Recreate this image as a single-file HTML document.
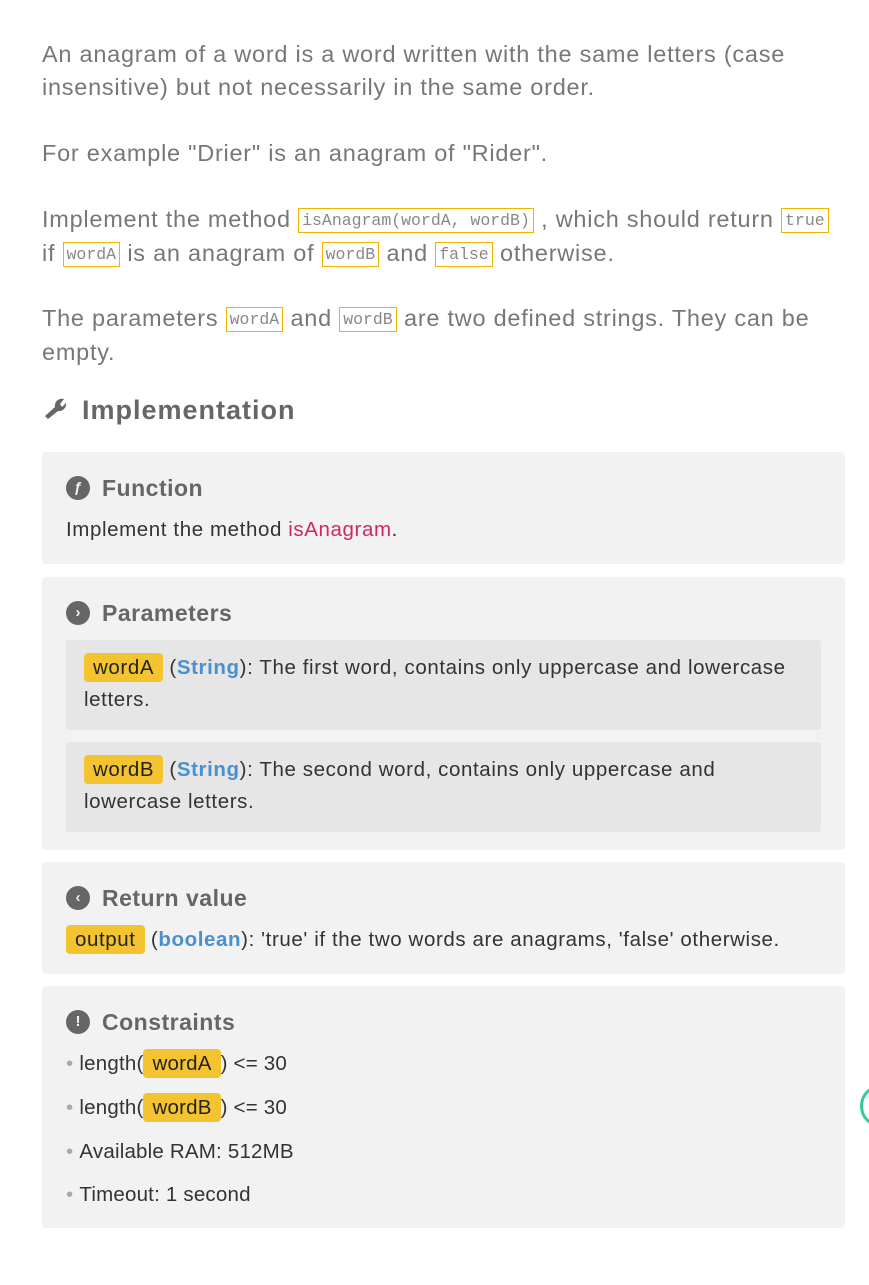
<!DOCTYPE html>
<html><head><meta charset="utf-8"><style>
body{margin:0;background:#fff;font-family:"Liberation Sans",sans-serif;width:869px;height:1285px;overflow:hidden;position:relative}
.p{position:absolute;left:42px;width:800px;color:#777;font-size:23.5px;line-height:33px;letter-spacing:0.75px}
code{font-family:"Liberation Mono",monospace;font-size:16.5px;color:#888;border:1px solid #f0b400;padding:2px 3px;vertical-align:2px;letter-spacing:0}
h2{position:absolute;left:42px;top:392px;margin:0;font-size:27px;color:#666;font-weight:bold;line-height:36px;letter-spacing:1px}
.box{position:absolute;left:42px;width:803px;background:#f2f2f2;border-radius:4px}
.t{position:absolute;left:24px;font-size:23px;font-weight:bold;color:#666;line-height:30px;display:flex;align-items:center;letter-spacing:0.5px}
.t i{display:inline-block;width:24px;height:24px;border-radius:50%;background:#666;color:#f2f2f2;font-size:15px;text-align:center;line-height:24px;margin-right:12px;font-style:normal;letter-spacing:0}
.x{position:absolute;left:24px;font-size:20.5px;color:#333;line-height:32px;letter-spacing:0.6px}
.hl{background:#f4c430;border-radius:4px;padding:3px 9px;color:#222}
.ty{color:#4a90d0;font-weight:bold}
.it{position:absolute;left:24px;width:755px;background:#e6e6e6;border-radius:3px;padding:12px 18px 14px;box-sizing:border-box;font-size:20.5px;line-height:32px;color:#333;letter-spacing:0.6px}
.li{position:absolute;left:24px;font-size:20.5px;color:#333;letter-spacing:0.2px}
.li b{color:#aaa;font-weight:normal;margin-right:6px}
</style></head><body>
<div class="p" style="top:38px">An anagram of a word is a word written with the same letters (case<br>insensitive) but not necessarily in the same order.</div>
<div class="p" style="top:137px">For example "Drier" is an anagram of "Rider".</div>
<div class="p" style="top:203px">Implement the method <code>isAnagram(wordA, wordB)</code> , which should return <code>true</code><br>if <code>wordA</code> is an anagram of <code>wordB</code> and <code>false</code> otherwise.</div>
<div class="p" style="top:302px">The parameters <code>wordA</code> and <code>wordB</code> are two defined strings. They can be<br>empty.</div>
<h2><svg width="26" height="24" viewBox="0 0 26 24" style="vertical-align:-2px;margin-right:14px"><path d="M3 19 L13 10 A7 7 0 0 1 22 2 L18 7 L20 10 L24 6 A7 7 0 0 1 16 14 L6 22 Z" fill="#666"/></svg>Implementation</h2>
<div class="box" style="top:452px;height:112px">
<div class="t" style="top:21px"><i>ƒ</i>Function</div>
<div class="x" style="top:62px">Implement the method <span style="color:#d0285a">isAnagram</span>.</div>
</div>
<div class="box" style="top:577px;height:273px">
<div class="t" style="top:21px"><i>›</i>Parameters</div>
<div class="it" style="top:63px;height:90px"><span class="hl">wordA</span> (<span class="ty">String</span>): The first word, contains only uppercase and lowercase letters.</div>
<div class="it" style="top:165px;height:90px"><span class="hl">wordB</span> (<span class="ty">String</span>): The second word, contains only uppercase and lowercase letters.</div>
</div>
<div class="box" style="top:862px;height:112px">
<div class="t" style="top:21px"><i>‹</i>Return value</div>
<div class="x" style="top:62px"><span class="hl">output</span> (<span class="ty">boolean</span>): 'true' if the two words are anagrams, 'false' otherwise.</div>
</div>
<div class="box" style="top:986px;height:242px">
<div class="t" style="top:21px"><i>!</i>Constraints</div>
<div class="li" style="top:66px"><b>•</b>length(<span class="hl">wordA</span>) &lt;= 30</div>
<div class="li" style="top:110px"><b>•</b>length(<span class="hl">wordB</span>) &lt;= 30</div>
<div class="li" style="top:154px"><b>•</b>Available RAM: 512MB</div>
<div class="li" style="top:197px"><b>•</b>Timeout: 1 second</div>
</div>
<div style="position:absolute;left:860px;top:1084px;width:44px;height:44px;border:3px solid #2ecc9a;border-radius:50%;box-sizing:border-box"></div>
</body></html>
